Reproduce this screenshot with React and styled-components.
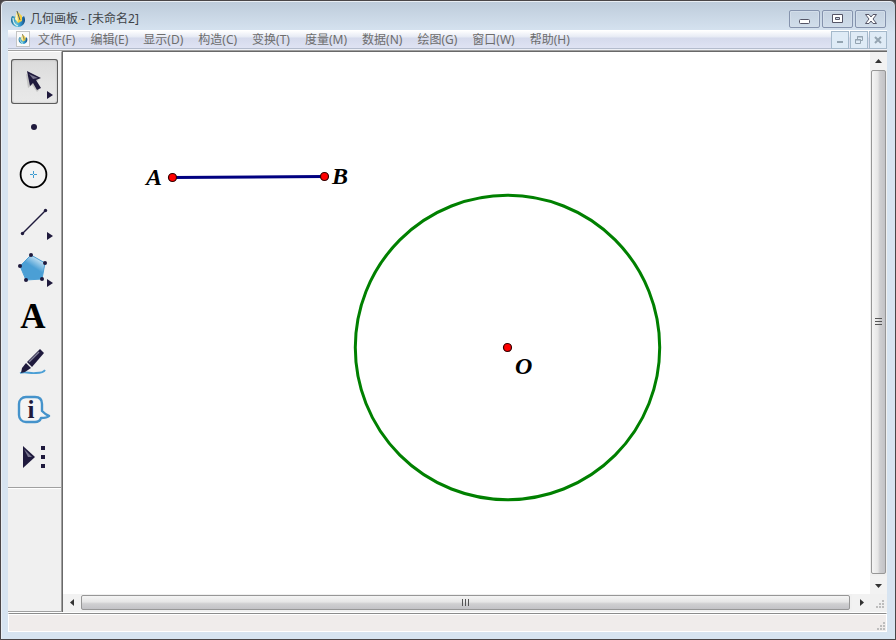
import styled, { createGlobalStyle, css } from "styled-components"

const MENUS = ["文件(F)", "编辑(E)", "显示(D)", "构造(C)", "变换(T)", "度量(M)", "数据(N)", "绘图(G)", "窗口(W)", "帮助(H)"]

const INK = "#1f1a3d"

const Logo = ({ size }) => (
    <svg width={size} height={size} viewBox="0 0 16 16" aria-hidden="true">
        <defs>
            <linearGradient id="ball" x1="0" x2="1">
                <stop offset="0" stopColor="#1e6fa0" />
                <stop offset="0.4" stopColor="#5fc3d8" />
                <stop offset="0.7" stopColor="#2b8fca" />
                <stop offset="1" stopColor="#17497c" />
            </linearGradient>
        </defs>
        <path d="M2 5C-1 11 3 16 8 16C13 16 17 11 14 5L10 8L7 6Z" fill="url(#ball)" />
        <path d="M3 7C3 11 5 14 8 15" fill="none" stroke="#d9f2f2" strokeWidth="1.2" />
        <path d="M7 0L12 5V10L8 12L5 8Z" fill="#f2cf45" />
        <path d="M7 1L8 11L5 8Z" fill="#fbf3c2" />
        <path d="M7 0L10 9" stroke="#536067" strokeWidth="1" />
    </svg>
)

const Flyout = () => <path d="M36 32V40L42 36Z" fill={INK} />

const TOOLS = [
    {
        name: "移动箭头工具",
        icon: (
            <>
                <path d="M15 15L17 29L21 26L26 33L28 31L24 23L28 21Z" fill="#b4b4b4" opacity="0.7" />
                <path d="M16 12L19 27L22 24L26 31L30 29L25 21L30 19Z" fill={INK} />
                <path d="M18 15L27 19L22 20Z" fill="#77748d" />
                <Flyout />
            </>
        ),
    },
    { name: "点工具", icon: <circle cx="23" cy="21" r="3" fill={INK} /> },
    {
        name: "圆工具",
        icon: (
            <>
                <circle cx="22.5" cy="21.5" r="12.9" fill="#f3f3f3" stroke="#000" strokeWidth="1.8" />
                <path d="M19 21.5H22M23 21.5H26M22.5 18V21M22.5 22V25" stroke="#3e9bd0" />
            </>
        ),
    },
    {
        name: "线段直尺工具",
        icon: (
            <>
                <path d="M11.5 33.5L34.5 10.5" stroke={INK} strokeWidth="1.4" />
                <circle cx="11.5" cy="33.5" r="1.7" fill={INK} />
                <circle cx="34.5" cy="10.5" r="1.7" fill={INK} />
                <Flyout />
            </>
        ),
    },
    {
        name: "多边形工具",
        icon: (
            <>
                <defs>
                    <linearGradient id="shine" x1="0.8" y1="0.1" x2="0.55" y2="0.5">
                        <stop offset="0" stopColor="#d8ecf8" />
                        <stop offset="1" stopColor="#4b9fd5" />
                    </linearGradient>
                </defs>
                <path d="M20 8L34 16L31 32L15 33L9 19Z" fill="url(#shine)" stroke="#4b9fd5" />
                {[[20, 8], [34, 16], [31, 32], [15, 33], [9, 19]].map(([x, y]) => (
                    <circle key={x} cx={x} cy={y} r="2" fill={INK} />
                ))}
                <Flyout />
            </>
        ),
    },
    {
        name: "文本工具",
        icon: (
            <text x="22" y="34" textAnchor="middle" fontFamily="Liberation Serif, serif" fontWeight="bold" fontSize="35">A</text>
        ),
    },
    {
        name: "标记工具",
        icon: (
            <>
                <path d="M9 32C15 30 19 33 25 32C29 32 33 31 34 29" fill="none" stroke="#4b9fd5" strokeWidth="1.8" />
                <path d="M29 8L33 12L21 26L16 21Z" fill={INK} />
                <path d="M15 22L20 27L14 31L10 32L11 27Z" fill={INK} />
                <path d="M28 11L18 21" stroke="#84829a" strokeWidth="1.4" />
            </>
        ),
    },
    {
        name: "信息工具",
        icon: (
            <>
                <path
                    d="M15 9H24C29 9 31 12 31 16V23C33 25 35 27 38 28C36 30 33 30 30 30C29 33 27 34 24 34H15C11 34 8 31 8 27V16C8 12 11 9 15 9Z"
                    fill="#f4f4f4"
                    stroke="#4593cb"
                    strokeWidth="2.4"
                    strokeLinejoin="round"
                />
                <text x="20" y="30" textAnchor="middle" fontFamily="Liberation Serif, serif" fontWeight="bold" fontSize="25" fill={INK}>i</text>
            </>
        ),
    },
    {
        name: "自定义工具",
        icon: (
            <>
                <path d="M12 11V33L24 22Z" fill={INK} />
                <path d="M13 14L21 22H17Z" fill="#77748d" />
                <path d="M30 11h4v4h-4zM30 20h4v4h-4zM30 29h4v4h-4z" fill={INK} />
            </>
        ),
    },
]

const Point = ({ x, y }) => <circle cx={x} cy={y} r="4" fill="#f00" stroke="#300" strokeWidth="1.2" />

const Sketch = () => (
    <Drawing width="600" height="460" viewBox="0 0 600 460" role="img" aria-label="线段 AB 和圆 O">
        <circle cx="444.5" cy="295.5" r="152.2" fill="none" stroke="#008000" strokeWidth="3" />
        <path d="M109.5 125.5L261.5 124.5" stroke="#000080" strokeWidth="3" />
        <Point x="109.5" y="125.5" />
        <Point x="261.5" y="124.5" />
        <Point x="444.5" y="295.5" />
        <text x="83" y="133">A</text>
        <text x="269" y="132">B</text>
        <text x="452" y="322">O</text>
    </Drawing>
)

const Arrow = ({ d }) => (
    <svg width="9" height="9" viewBox="0 0 9 9" aria-hidden="true">
        <path d={d} fill="#333" />
    </svg>
)

const SizeGrip = () => (
    <Grip width="10" height="10" viewBox="0 0 10 10" aria-hidden="true">
        <path d="M7 1h2v2h-2zM7 4h2v2h-2zM4 4h2v2h-2zM7 7h2v2h-2zM4 7h2v2h-2zM1 7h2v2h-2z" fill="#bdbdbd" />
    </Grip>
)

const App = () => {
    return (
        <>
            <GlobalStyle />
            <Window>
                <TitleBar>
                    <Logo size={16} />
                    <Title>几何画板 - [未命名2]</Title>
                    <Captions>
                        <CaptionButton aria-label="最小化">
                            <svg width="12" height="12" viewBox="0 0 12 12">
                                <rect x="0.5" y="6.5" width="10" height="4" rx="1" fill="#fff" stroke="#555566" />
                            </svg>
                        </CaptionButton>
                        <CaptionButton aria-label="最大化">
                            <svg width="12" height="12" viewBox="0 0 12 12">
                                <path d="M.5 1.5h10v8h-10zM3.5 4.5v2h4v-2z" fill="#fff" fillRule="evenodd" stroke="#555566" />
                            </svg>
                        </CaptionButton>
                        <CaptionButton aria-label="关闭">
                            <svg width="12" height="12" viewBox="0 0 12 12">
                                <path d="M.5 1.5h3.5l2 2.500 2-2.500h3.500l-3.500 4.500 3.500 4.500h-3.500l-2-2.500-2 2.500h-3.500l3.500-4.500z" fill="#fff" stroke="#555566" />
                            </svg>
                        </CaptionButton>
                    </Captions>
                </TitleBar>

                <MenuBar>
                    <DocIcon>
                        <Logo size={10} />
                    </DocIcon>
                    <Menus>
                        {MENUS.map((item) => (
                            <MenuItem key={item}>{item}</MenuItem>
                        ))}
                    </Menus>
                    <DocButtons>
                        <DocButton aria-label="最小化文档">
                            <svg width="10" height="10" viewBox="0 0 10 10">
                                <path d="M2 7h6" stroke="#94a4b1" strokeWidth="2" />
                            </svg>
                        </DocButton>
                        <DocButton aria-label="还原文档">
                            <svg width="10" height="10" viewBox="0 0 10 10">
                                <path d="M3.5 4V1.5h5v4H7M1.5 4.5h5v4h-5zM3 2h6M1 5h6" fill="none" stroke="#94a4b1" />
                            </svg>
                        </DocButton>
                        <DocButton aria-label="关闭文档">
                            <svg width="10" height="10" viewBox="0 0 10 10">
                                <path d="M2 2l6 6M8 2l-6 6" stroke="#94a4b1" strokeWidth="2" />
                            </svg>
                        </DocButton>
                    </DocButtons>
                </MenuBar>

                <Workspace>
                    <Toolbox>
                        <Tools>
                            {TOOLS.map(({ name, icon }, i) => (
                                <ToolButton key={name} aria-label={name} aria-pressed={i === 0} $active={i === 0}>
                                    <svg width="47" height="45" viewBox="0 0 47 45">{icon}</svg>
                                </ToolButton>
                            ))}
                        </Tools>
                    </Toolbox>
                    <Document>
                        <Canvas>
                            <Sketch />
                        </Canvas>
                        <ScrollBar $vertical>
                            <ScrollButton $vertical aria-label="向上滚动"><Arrow d="M1 6L4.5 2L8 6Z" /></ScrollButton>
                            <Thumb $vertical>
                                <svg width="7" height="8" viewBox="0 0 7 8">
                                    <path d="M0 .5h7M0 3.5h7M0 6.5h7" stroke="#555" />
                                </svg>
                            </Thumb>
                            <ScrollButton $vertical aria-label="向下滚动"><Arrow d="M1 3L4.5 7L8 3Z" /></ScrollButton>
                        </ScrollBar>
                        <ScrollBar>
                            <ScrollButton aria-label="向左滚动"><Arrow d="M6 1L2 4.5L6 8Z" /></ScrollButton>
                            <Thumb>
                                <svg width="8" height="7" viewBox="0 0 8 7">
                                    <path d="M.5 0v7M3.5 0v7M6.5 0v7" stroke="#555" />
                                </svg>
                            </Thumb>
                            <ScrollButton aria-label="向右滚动"><Arrow d="M3 1L7 4.5L3 8Z" /></ScrollButton>
                        </ScrollBar>
                        <Corner>
                            <SizeGrip />
                        </Corner>
                    </Document>
                </Workspace>

                <StatusBar>
                    <SizeGrip />
                </StatusBar>
            </Window>
        </>
    )
}

const GlobalStyle = createGlobalStyle`
    * {
        box-sizing: border-box;
    }

    body {
        margin: 0;
        background: #4a4648;
        font-family: "Noto Sans", "Noto Sans CJK SC", sans-serif;
        font-size: 12px;
    }

    button {
        padding: 0;
        border: 0;
        background: none;
        font: inherit;
    }

    svg {
        display: block;
    }
`

const Window = styled.div`
    min-height: 100vh;
    display: flex;
    flex-direction: column;
    padding: 0 8px 7px 7px;
    border: 1px solid #4a4648;
    border-radius: 6px 6px 0 0;
    background: #d7e4f1;
    background-image: linear-gradient(#bdcbda, #d7e4f1 32px);
    box-shadow: inset 0 1px #e9eef4, inset 1px 0 #e9eef4;
`

const TitleBar = styled.header`
    height: 29px;
    display: flex;
    align-items: center;
    padding: 6px 1px 0 2px;
    gap: 4px;
`

const Title = styled.h1`
    flex: 1;
    margin: 0;
    font-size: 12px;
    font-weight: 400;
    line-height: 16px;
    color: #3f4347;
`

const Captions = styled.div`
    display: flex;
    gap: 2px;
`

const CaptionButton = styled.button`
    width: 31px;
    height: 18px;
    display: flex;
    align-items: center;
    justify-content: center;
    border: 1px solid #8593ad;
    border-radius: 2px;
    background: linear-gradient(#c5d2e0, #d0ddea);
    box-shadow: inset 0 0 0 1px #d3deea;
`

const MenuBar = styled.nav`
    height: 20px;
    display: flex;
    align-items: stretch;
    padding-left: 8px;
    border-top: 1px solid #fff;
    border-bottom: 1px solid #eef0f6;
    background: linear-gradient(#fdfdfe, #e6eaf4 6px, #d5daec 7px, #dfe3f3 17px, #b4bccd 17px);
    color: #6d6d6d;
`

const DocIcon = styled.span`
    width: 14px;
    height: 16px;
    display: flex;
    align-items: center;
    justify-content: center;
    border: 1px solid #c4c4c4;
    background: #fafafa;
`

const Menus = styled.div`
    flex: 1;
    display: flex;
    gap: 15px;
    margin-left: 8px;
`

const MenuItem = styled.button`
    line-height: 18px;
    color: inherit;
    white-space: nowrap;
`

const DocButtons = styled.div`
    display: flex;
    gap: 1px;
`

const DocButton = styled.button`
    width: 18px;
    display: flex;
    align-items: center;
    justify-content: center;
    border: 1px solid #a5b9cb;
    background: #dfebf6;
`

const Workspace = styled.main`
    flex: 1;
    display: flex;
    border-top: 1px solid #a0a0a0;
    border-bottom: 1px solid #fff;
    background: #f0f0f0;
`

const Toolbox = styled.aside`
    width: 54px;
    border-top: 1px solid #fff;
    border-right: 1px solid #a0a0a0;
    border-bottom: 1px solid #a0a0a0;
`

const Tools = styled.div`
    display: flex;
    flex-direction: column;
    gap: 2px;
    padding: 7px 3px;
    border-bottom: 1px solid #a0a0a0;
    box-shadow: 0 1px #fff;
`

const ToolButton = styled.button`
    height: 45px;
    border-radius: 3px;

    ${({ $active }) => $active && css`
        background: linear-gradient(#dadada, #e4e4e4 50%, #e9e9e9);
        box-shadow: inset 0 0 0 1px #5c5c5c, inset 0 0 2px 1px #aaa;
    `}
`

const Document = styled.section`
    flex: 1;
    display: grid;
    grid-template-columns: 1fr 17px;
    grid-template-rows: 1fr 17px;
    padding-bottom: 1px;
    border-top: 1px solid #696969;
    border-left: 1px solid #696969;
`

const Canvas = styled.div`
    overflow: hidden;
    background: #fff;
`

const Drawing = styled.svg`
    font-family: "Liberation Serif", serif;
    font-size: 24px;
    font-weight: bold;
    font-style: italic;
`

const ScrollBar = styled.div`
    display: flex;
    flex-direction: ${({ $vertical }) => ($vertical ? "column" : "row")};
    background: #f0f0f0;
`

const ScrollButton = styled.button`
    flex: none;
    width: ${({ $vertical }) => ($vertical ? "17px" : "18px")};
    height: ${({ $vertical }) => ($vertical ? "18px" : "17px")};
    display: flex;
    align-items: center;
    justify-content: center;
    background: #f2f2f2;
`

const Thumb = styled.div`
    flex: 1;
    display: flex;
    align-items: center;
    justify-content: center;
    margin: ${({ $vertical }) => ($vertical ? "0 1px 2px" : "1px 2px 1px 0")};
    border: 1px solid #979797;
    border-radius: 2px;
    background: linear-gradient(${({ $vertical }) => ($vertical ? "to right" : "to bottom")}, #f5f5f5, #e6e6e6 45%, #cfcfd1 60%, #c2c2c6);
`

const Corner = styled.div`
    display: flex;
    align-items: flex-end;
    justify-content: flex-end;
    padding: 2px;
`

const Grip = styled.svg`
    flex: none;
`

const StatusBar = styled.footer`
    height: 19px;
    display: flex;
    align-items: flex-end;
    justify-content: flex-end;
    border: 1px solid #fff;
    border-top: 1px solid #8c8c8c;
    background: #f0eceb;
    box-shadow: inset 0 1px #fff;
`

export default App
